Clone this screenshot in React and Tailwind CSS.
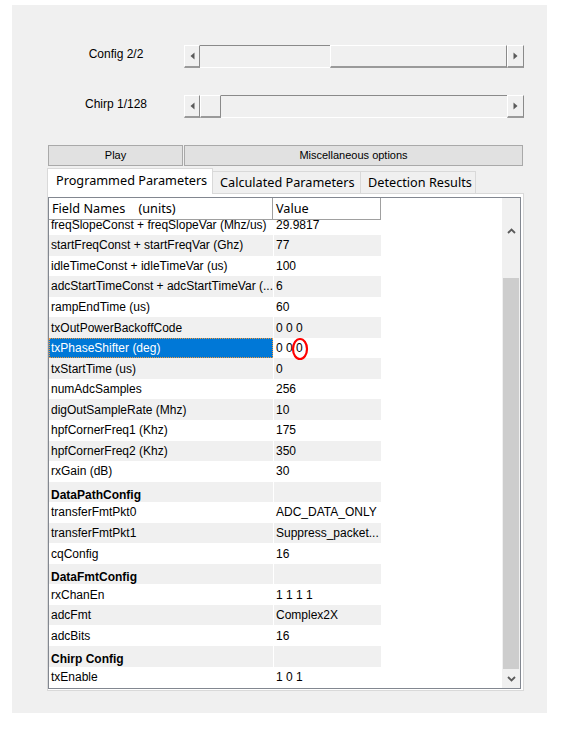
import React from "react";

const ARIAL = "font-['Liberation_Sans',Arial,sans-serif]";
const UI = "font-['Noto_Sans',sans-serif]";

function Tri({ dir }) {
  return (
    <svg width="5" height="8" viewBox="0 0 5 8">
      <polygon points={dir === "left" ? "4.5,0.5 4.5,7.5 0.5,4" : "0.5,0.5 0.5,7.5 4.5,4"} fill="#5a5a5a" />
    </svg>
  );
}

const RAISED =
  "h-full bg-[#f0f0f0] border-t border-l border-t-white border-l-white border-r border-r-[#8a8a8a] border-b-2 border-b-[#9a9a9a]";
const TROUGH = "h-full bg-[#f0f0f0] border-t border-t-[#8a8a8a] border-b border-b-white";

function Slider({ parts }) {
  return (
    <div className="flex h-[23px] w-[340px]">
      <div className={`${RAISED} w-[16px] flex items-center justify-center`}>
        <Tri dir="left" />
      </div>
      {parts.map((p, i) =>
        p.type === "thumb" ? (
          <div key={i} className={RAISED} style={{ width: p.w }} />
        ) : (
          <div key={i} className={TROUGH} style={{ width: p.w }} />
        )
      )}
      <div className={`${RAISED} w-[17px] flex items-center justify-center`}>
        <Tri dir="right" />
      </div>
    </div>
  );
}

function SliderRow({ label, parts, className }) {
  return (
    <div className={`flex ${className}`}>
      <div className={`w-[136px] h-[23px] flex items-center justify-center pb-[6px] text-[12px] text-black ${ARIAL}`}>
        {label}
      </div>
      <Slider parts={parts} />
    </div>
  );
}

const rows = [
  ["freqSlopeConst + freqSlopeVar (Mhz/us)", "29.9817"],
  ["startFreqConst + startFreqVar (Ghz)", "77"],
  ["idleTimeConst + idleTimeVar (us)", "100"],
  ["adcStartTimeConst + adcStartTimeVar (...", "6"],
  ["rampEndTime (us)", "60"],
  ["txOutPowerBackoffCode", "0 0 0"],
  ["txPhaseShifter (deg)", "0 0 0", "sel"],
  ["txStartTime (us)", "0"],
  ["numAdcSamples", "256"],
  ["digOutSampleRate (Mhz)", "10"],
  ["hpfCornerFreq1 (Khz)", "175"],
  ["hpfCornerFreq2 (Khz)", "350"],
  ["rxGain (dB)", "30"],
  ["DataPathConfig", "", "head"],
  ["transferFmtPkt0", "ADC_DATA_ONLY"],
  ["transferFmtPkt1", "Suppress_packet..."],
  ["cqConfig", "16"],
  ["DataFmtConfig", "", "head"],
  ["rxChanEn", "1 1 1 1"],
  ["adcFmt", "Complex2X"],
  ["adcBits", "16"],
  ["Chirp Config", "", "head"],
  ["txEnable", "1 0 1"],
];

function Row({ name, value, kind, gray }) {
  const bg = gray ? "bg-[#f0f0f0]" : "bg-white";
  return (
    <div className={`flex h-[20.55px] text-[12px] text-black ${ARIAL}`}>
      {kind === "sel" ? (
        <div className="w-[224px] h-full bg-[#0078d7] text-white border border-dotted border-[#f39a3c] pl-[1px] flex items-center whitespace-nowrap overflow-hidden">
          {name}
        </div>
      ) : kind === "head" ? (
        <div className={`w-[224px] h-full ${bg} pl-[2px] pt-[6px] flex items-center font-bold whitespace-nowrap overflow-hidden`}>
          {name}
        </div>
      ) : (
        <div className={`w-[224px] h-full ${bg} pl-[2px] flex items-center whitespace-nowrap overflow-hidden`}>
          {name}
        </div>
      )}
      <div className={`w-[108px] h-full ${bg} border-l border-l-white pl-[2px] flex items-center whitespace-pre overflow-hidden`}>
        {value}
      </div>
    </div>
  );
}

function Chevron({ up }) {
  return (
    <svg width="9" height="6" viewBox="0 0 9 6">
      <polyline
        points={up ? "1,5 4.5,1.5 8,5" : "1,1 4.5,4.5 8,1"}
        fill="none"
        stroke="#5a5a5a"
        strokeWidth="1.8"
      />
    </svg>
  );
}

export default function App() {
  return (
    <div className="w-[563px] h-[731px] bg-white pt-[5px] pl-[12px]">
      <div className="w-[535px] h-[708px] bg-[#f0f0f0] pl-[36px] pt-[40px] flex flex-col">
        <SliderRow
          label="Config 2/2"
          parts={[
            { type: "trough", w: 130 },
            { type: "thumb", w: 177 },
          ]}
        />
        <SliderRow
          className="mt-[27px]"
          label="Chirp 1/128"
          parts={[
            { type: "thumb", w: 21 },
            { type: "trough", w: 286 },
          ]}
        />

        <div className={`flex gap-[1px] mt-[27px] h-[21px] text-[11px] text-black ${ARIAL}`}>
          <div className="w-[135px] h-full bg-[#e1e1e1] border border-[#a9a9a9] flex items-center justify-center">
            Play
          </div>
          <div className="w-[339px] h-full bg-[#e1e1e1] border border-[#a9a9a9] flex items-center justify-center">
            Miscellaneous options
          </div>
        </div>

        <div className={`ml-[-1px] mt-[2px] flex flex-col ${UI}`}>
          <div className="flex items-end h-[25px] text-[12.7px] text-black">
            <div className="relative z-10 w-[166px] h-[26px] -mb-px bg-white border border-b-0 border-[#d9d9d9] pl-[8px] pb-[2px] flex items-center whitespace-nowrap">
              Programmed Parameters
            </div>
            <div className="w-[148px] h-[22px] bg-[#f0f0f0] border-t border-r border-[#d9d9d9] pl-[7px] flex items-center whitespace-nowrap">
              Calculated Parameters
            </div>
            <div className="w-[115px] h-[22px] bg-[#f0f0f0] border-t border-r border-[#d9d9d9] pl-[7px] flex items-center whitespace-nowrap">
              Detection Results
            </div>
          </div>

          <div className="w-[477px] h-[498px] bg-white border border-[#d9d9d9] pt-[3px]">
            <div className="w-[473px] h-[492px] border border-[#828790] flex">
              <div className="w-[453px] h-full flex flex-col">
                <div className="flex h-[22px] text-[12.7px] text-black">
                  <div className="w-[224px] h-full border-r border-b border-[#a0a0a0] pl-[3px] flex items-center whitespace-pre">
                    {"Field Names    (units)"}
                  </div>
                  <div className="w-[108px] h-full border-r border-b border-[#a0a0a0] pl-[3px] flex items-center">
                    Value
                  </div>
                </div>
                <div className="relative h-[468px] overflow-hidden">
                  <div className="mt-[-6.5px]">
                    <div className="h-[1px]" />
                    {rows.map((r, i) => (
                      <Row key={i} name={r[0]} value={r[1]} kind={r[2]} gray={i % 2 === 1} />
                    ))}
                  </div>
                  <svg className="absolute left-[241px] top-[117px]" width="20" height="24" viewBox="0 0 20 24">
                    <ellipse cx="10" cy="12" rx="7" ry="10" fill="none" stroke="#ff0000" strokeWidth="2.2" />
                  </svg>
                </div>
              </div>
              <div className="w-[18px] h-full bg-[#f0f0f0] flex flex-col items-center">
                <div className="h-[22px]" />
                <div className="h-[22px] flex items-center justify-center">
                  <Chevron up />
                </div>
                <div className="mt-[36px] w-[16px] h-[391px] bg-[#cdcdcd]" />
                <div className="h-[19px] flex items-center justify-center">
                  <Chevron />
                </div>
              </div>
            </div>
          </div>
        </div>
      </div>
    </div>
  );
}
